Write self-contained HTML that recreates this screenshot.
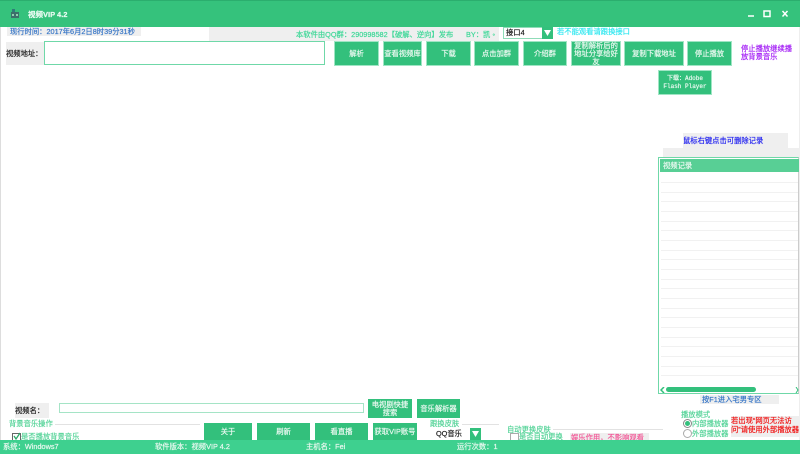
<!DOCTYPE html>
<html lang="zh"><head><meta charset="utf-8"><title>视频VIP 4.2</title>
<style>
html,body{margin:0;padding:0;background:#fff}
#p{position:relative;width:800px;height:454px;overflow:hidden;background:#fff;font-family:"Liberation Sans","WenQuanYi Zen Hei","Noto Sans CJK SC",sans-serif;font-size:7.300px;line-height:11px;color:#333;-webkit-text-stroke:.2px currentColor}
#p div{position:absolute;white-space:nowrap}
.b{background:#33c07c;color:#e8f8ef;text-align:center;box-shadow:0 0 0 1px #9fe5c4;display:flex;align-items:center;justify-content:center;white-space:normal!important;line-height:8px}
.g{background:#efefef}
.l{height:1px;background:#e2e2e2}
.r{left:661px;width:137px;height:1px;background:#f1f1f1}
</style></head><body><div id="p">
<div style="left:0;top:0;width:800px;height:27px;background:#35c27c;border-top:1px solid #2bae6e;box-sizing:border-box"></div>
<div style="left:0;top:27px;width:1px;height:413px;background:#ddd"></div>
<div style="left:799px;top:27px;width:1px;height:413px;background:#eee"></div>
<svg style="position:absolute;left:10px;top:8px" width="10" height="11" viewBox="0 0 10 11"><rect x="1" y="4" width="8" height="6" fill="#3d6f6a"/><rect x="2" y="1" width="3" height="3" fill="#2f7d78"/><rect x="6" y="6" width="2" height="2" fill="#8fd0b0"/><rect x="2" y="6" width="2" height="2" fill="#8fd0b0"/></svg>
<div style="left:28px;top:9px;color:#e9fbf2;font-weight:bold;font-size:7.500px">视频VIP 4.2</div>
<svg style="position:absolute;left:740px;top:6px" width="50" height="14" viewBox="0 0 50 14"><path d="M8 10H14" stroke="#fff" stroke-width="1.500"/><rect x="24" y="5" width="6" height="5.500" fill="none" stroke="#fff" stroke-width="1.500"/><path d="M42.500 5L47.500 10.500M47.500 5L42.500 10.500" stroke="#fff" stroke-width="1.500"/></svg>

<div class="g" style="left:7px;top:27px;width:134px;height:9px"></div>
<div style="left:10px;top:26px;color:#3a78c8">现行时间：2017年6月2日8时39分31秒</div>
<div class="g" style="left:209px;top:27px;width:290px;height:14px"></div>
<div style="left:296px;top:29px;color:#3fd898">本软件由QQ群：290998582【破解、逆向】发布</div>
<div style="left:466px;top:29px;color:#3fd898">BY：凯 ◦</div>
<div style="left:503px;top:27px;width:50px;height:12px;line-height:12px;background:#fff;box-shadow:inset 0 0 0 1px #8fdcb8;color:#222;padding-left:3px;box-sizing:border-box">接口4</div>
<div style="left:542px;top:27px;width:11px;height:12px;background:#33c07c"></div>
<svg style="position:absolute;left:544px;top:30px" width="7" height="6"><path d="M0 0H7L3.500 6Z" fill="#fff"/></svg>
<div style="left:557px;top:26px;color:#35e8f0">若不能观看请跟换接口</div>

<div class="g" style="left:6px;top:42px;width:38px;height:23px"></div>
<div style="left:6px;top:48px;color:#222">视频地址：</div>
<div style="left:44px;top:41px;width:281px;height:24px;border:1px solid #6fd8a8;box-sizing:border-box;background:#fff"></div>

<div class="b" style="left:335px;top:42px;width:43px;height:23px">解析</div>
<div class="b" style="left:384px;top:42px;width:37px;height:23px">查看视频库</div>
<div class="b" style="left:427px;top:42px;width:43px;height:23px">下载</div>
<div class="b" style="left:475px;top:42px;width:43px;height:23px">点击加群</div>
<div class="b" style="left:524px;top:42px;width:42px;height:23px">介绍群</div>
<div class="b" style="left:572px;top:42px;width:48px;height:23px">复制解析后的<br>地址分享给好<br>友</div>
<div class="b" style="left:625px;top:42px;width:58px;height:23px">复制下载地址</div>
<div class="b" style="left:688px;top:42px;width:43px;height:23px">停止播放</div>
<div style="left:741px;top:45px;width:52px;color:#a420f5;white-space:normal;line-height:8px">停止播放继续播<br>放背景音乐</div>
<div class="b" style="left:659px;top:71px;width:52px;height:23px;font-size:6px;line-height:7.500px;font-family:'Liberation Mono','WenQuanYi Zen Hei',monospace">下载：Adobe<br>Flash Player</div>

<div class="g" style="left:683px;top:133px;width:105px;height:15px"></div>
<div class="g" style="left:663px;top:148px;width:137px;height:10px"></div>
<div style="left:683px;top:135px;color:#2a2af0">鼠标右键点击可删除记录</div>

<div style="left:658px;top:157px;width:141px;height:237px;border:1px solid #6fd8a8;border-right:1px solid #ccc;box-sizing:border-box;background:#fff"></div>
<div style="left:660px;top:159px;width:139px;height:13px;background:#58cf95;color:#e8f8ef;line-height:13px;padding-left:3px;box-sizing:border-box">视频记录</div>
<div class="r" style="top:182px"></div><div class="r" style="top:192px"></div><div class="r" style="top:201px"></div><div class="r" style="top:211px"></div><div class="r" style="top:221px"></div><div class="r" style="top:230px"></div><div class="r" style="top:240px"></div><div class="r" style="top:250px"></div><div class="r" style="top:259px"></div><div class="r" style="top:269px"></div><div class="r" style="top:279px"></div><div class="r" style="top:288px"></div><div class="r" style="top:298px"></div><div class="r" style="top:308px"></div><div class="r" style="top:317px"></div><div class="r" style="top:327px"></div><div class="r" style="top:337px"></div><div class="r" style="top:346px"></div><div class="r" style="top:356px"></div><div class="r" style="top:366px"></div><div class="r" style="top:375px"></div>
<div style="left:666px;top:387px;width:90px;height:5px;background:#33c07c;border-radius:3px"></div>
<svg style="position:absolute;left:660px;top:387px" width="5" height="6"><path d="M4 0L1 3L4 6" fill="none" stroke="#33c07c" stroke-width="1.500"/></svg>
<svg style="position:absolute;left:795px;top:387px" width="4" height="6"><path d="M1 0L3 3L1 6" fill="none" stroke="#33c07c"/></svg>
<div class="g" style="left:700px;top:395px;width:79px;height:9px"></div>
<div style="left:702px;top:394px;color:#3a78c8">按F1进入宅男专区</div>

<div class="g" style="left:15px;top:403px;width:34px;height:15px"></div>
<div style="left:15px;top:405px;color:#222">视频名：</div>
<div style="left:59px;top:403px;width:305px;height:10px;border:1px solid #a5e4c6;box-sizing:border-box;background:#fff"></div>
<div class="b" style="left:368px;top:399px;width:44px;height:19px;box-shadow:none">电视剧快捷<br>搜索</div>
<div class="b" style="left:417px;top:399px;width:43px;height:19px;box-shadow:none">音乐解析器</div>

<div style="left:9px;top:418px;color:#58d49a">背景音乐操作</div>
<div class="l" style="left:55px;top:424px;width:145px"></div>
<div style="left:12px;top:433px;width:7px;height:7px;border:1px solid #666;background:#fff"></div>
<svg style="position:absolute;left:12px;top:432px" width="10" height="9"><path d="M2 4L4 7L8 1" fill="none" stroke="#2aa868" stroke-width="1.300"/></svg>
<div style="left:21px;top:431px;color:#58d49a">是否播放背景音乐</div>

<div class="b" style="left:204px;top:423px;width:48px;height:18px;box-shadow:none">关于</div>
<div class="b" style="left:257px;top:423px;width:53px;height:18px;box-shadow:none">刷新</div>
<div class="b" style="left:315px;top:423px;width:53px;height:18px;box-shadow:none">看直播</div>
<div class="b" style="left:373px;top:423px;width:44px;height:18px;box-shadow:none">获取VIP账号</div>

<div style="left:430px;top:418px;color:#58d49a">跟换皮肤</div>
<div class="l" style="left:462px;top:424px;width:37px"></div>
<div style="left:436px;top:428px;width:36px;height:12px;background:#fff;color:#222;line-height:12px;box-sizing:border-box">QQ音乐</div>
<div style="left:470px;top:428px;width:11px;height:12px;background:#33c07c"></div>
<svg style="position:absolute;left:472px;top:431px" width="7" height="6"><path d="M0 0H7L3.500 6Z" fill="#fff"/></svg>

<div style="left:507px;top:424px;color:#58d49a">自动更换皮肤</div>
<div class="l" style="left:553px;top:429px;width:110px"></div>
<div style="left:510px;top:433px;width:7px;height:7px;border:1px solid #aaa;background:#fff"></div>
<div style="left:519px;top:431px;color:#58d49a">是否自动更换</div>
<div class="g" style="left:570px;top:433px;width:79px;height:7px"></div>
<div style="left:571px;top:432px;color:#f25c9a">娱乐作用，不影响观看</div>

<div style="left:681px;top:409px;color:#58d49a">播放模式</div>
<div style="left:683px;top:419px;width:7px;height:7px;border-radius:50%;border:1px solid #888;background:#fff"></div>
<div style="left:685px;top:421px;width:5px;height:5px;border-radius:50%;background:#33c07c"></div>
<div style="left:683px;top:429px;width:7px;height:7px;border-radius:50%;border:1px solid #aaa;background:#fff"></div>
<div style="left:692px;top:418px;color:#58d49a">内部播放器</div>
<div style="left:692px;top:428px;color:#58d49a">外部播放器</div>
<div class="g" style="left:731px;top:416px;width:69px;height:21px"></div>
<div style="left:731px;top:417px;width:69px;color:#f01818;white-space:normal;line-height:8.500px">若出现“网页无法访问”请使用外部播放器</div>

<div style="left:0;top:440px;width:800px;height:14px;background:#3ed08f"></div>
<div style="left:3px;top:441px;color:#e8f8ef">系统：Windows7</div>
<div style="left:155px;top:441px;color:#e8f8ef">软件版本：视频VIP 4.2</div>
<div style="left:306px;top:441px;color:#e8f8ef">主机名：Fei</div>
<div style="left:457px;top:441px;color:#e8f8ef">运行次数：1</div>
</div></body></html>
